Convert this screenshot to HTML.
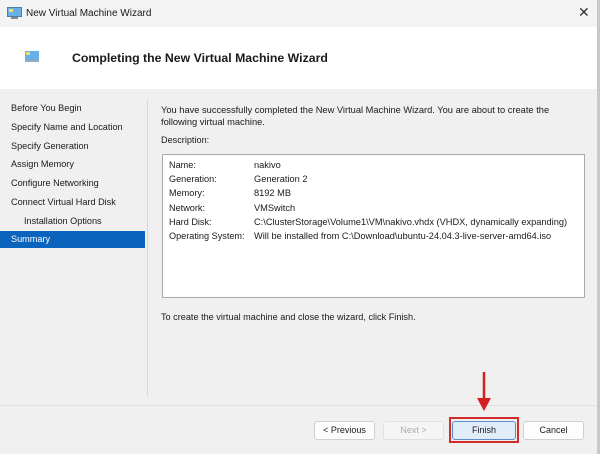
<!DOCTYPE html>
<html><head><style>
*{margin:0;padding:0;box-sizing:border-box}
body{width:600px;height:454px;overflow:hidden;background:#f0f0f0;font-family:"Liberation Sans",sans-serif;font-size:9.15px;color:#1a1a1a;position:relative}
.a{position:absolute;white-space:nowrap}
.btn{position:absolute;top:421px;height:19px;background:#fdfdfd;border:1px solid #d0d0d0;border-radius:3px;text-align:center;line-height:17px;font-size:9px}
</style></head><body>
<div class="a" style="left:0;top:0;width:600px;height:27px;background:#f3f3f3"></div>
<svg class="a" style="left:7px;top:7px" width="15" height="12"><rect x="0.5" y="0.5" width="14" height="9" fill="#6ab0e8" stroke="#4a7fb0"/><rect x="2" y="2" width="4" height="3" fill="#e8e070"/><rect x="4" y="10" width="7" height="2" fill="#888"/></svg>
<div class="a" style="left:26px;top:8px;font-size:10px">New Virtual Machine Wizard</div>
<div class="a" style="left:578px;top:4px;font-size:14px;color:#333">✕</div>
<div class="a" style="left:0;top:27px;width:597px;height:62px;background:#fff"></div>
<div class="a" style="left:597px;top:0;width:3px;height:454px;background:#c8c8c8"></div>
<svg class="a" style="left:25px;top:51px" width="14" height="11"><rect x="0" y="0" width="14" height="9" fill="#6ab0e8"/><rect x="1" y="1" width="4" height="3" fill="#e8e070"/><rect x="0" y="9" width="14" height="2" fill="#9ab"/></svg>
<div class="a" style="left:72px;top:51px;font-size:12.3px;font-weight:bold">Completing the New Virtual Machine Wizard</div>
<div class="a" style="left:147px;top:100px;width:1px;height:296px;background:#d8d8d8"></div>
<div class="a" style="left:0;top:405px;width:597px;height:1px;background:#e0e0e0"></div>
<div class="a" style="left:11px;top:103px">Before You Begin</div>
<div class="a" style="left:11px;top:122px">Specify Name and Location</div>
<div class="a" style="left:11px;top:141px">Specify Generation</div>
<div class="a" style="left:11px;top:159px">Assign Memory</div>
<div class="a" style="left:11px;top:178px">Configure Networking</div>
<div class="a" style="left:11px;top:197px">Connect Virtual Hard Disk</div>
<div class="a" style="left:24px;top:216px">Installation Options</div>
<div class="a" style="left:0;top:231px;width:145px;height:17px;background:#0a64bd"></div>
<div class="a" style="left:11px;top:234px;color:#fff">Summary</div>
<div class="a" style="left:161px;top:104px;line-height:12px;font-size:9.3px">You have successfully completed the New Virtual Machine Wizard. You are about to create the<br>following virtual machine.</div>
<div class="a" style="left:161px;top:135px">Description:</div>
<div class="a" style="left:162px;top:154px;width:423px;height:144px;background:#fff;border:1px solid #aaa"></div>
<div class="a" style="left:169px;top:158px;line-height:14.2px">Name:<br>Generation:<br>Memory:<br>Network:<br>Hard Disk:<br>Operating System:</div>
<div class="a" style="left:254px;top:158px;line-height:14.2px;font-size:9.25px">nakivo<br>Generation 2<br>8192 MB<br>VMSwitch<br>C:\ClusterStorage\Volume1\VM\nakivo.vhdx (VHDX, dynamically expanding)<br>Will be installed from C:\Download\ubuntu-24.04.3-live-server-amd64.iso</div>
<div class="a" style="left:161px;top:312px">To create the virtual machine and close the wizard, click Finish.</div>
<div class="btn" style="left:314px;width:61px">&lt; Previous</div>
<div class="btn" style="left:383px;width:61px;color:#aaa;background:#f5f5f5;border-color:#e0e0e0">Next &gt;</div>
<div class="a" style="left:449px;top:417px;width:70px;height:26px;border:2px solid #d42a2a"></div>
<div class="btn" style="left:452px;width:64px;background:#e0ecf8;border-color:#5a8fc8">Finish</div>
<div class="btn" style="left:523px;width:61px">Cancel</div>
<svg class="a" style="left:476px;top:372px" width="16" height="40"><line x1="8" y1="0" x2="8" y2="28" stroke="#d42020" stroke-width="2.5"/><path d="M1 26 L15 26 L8 39 Z" fill="#d42020"/></svg>
</body></html>
